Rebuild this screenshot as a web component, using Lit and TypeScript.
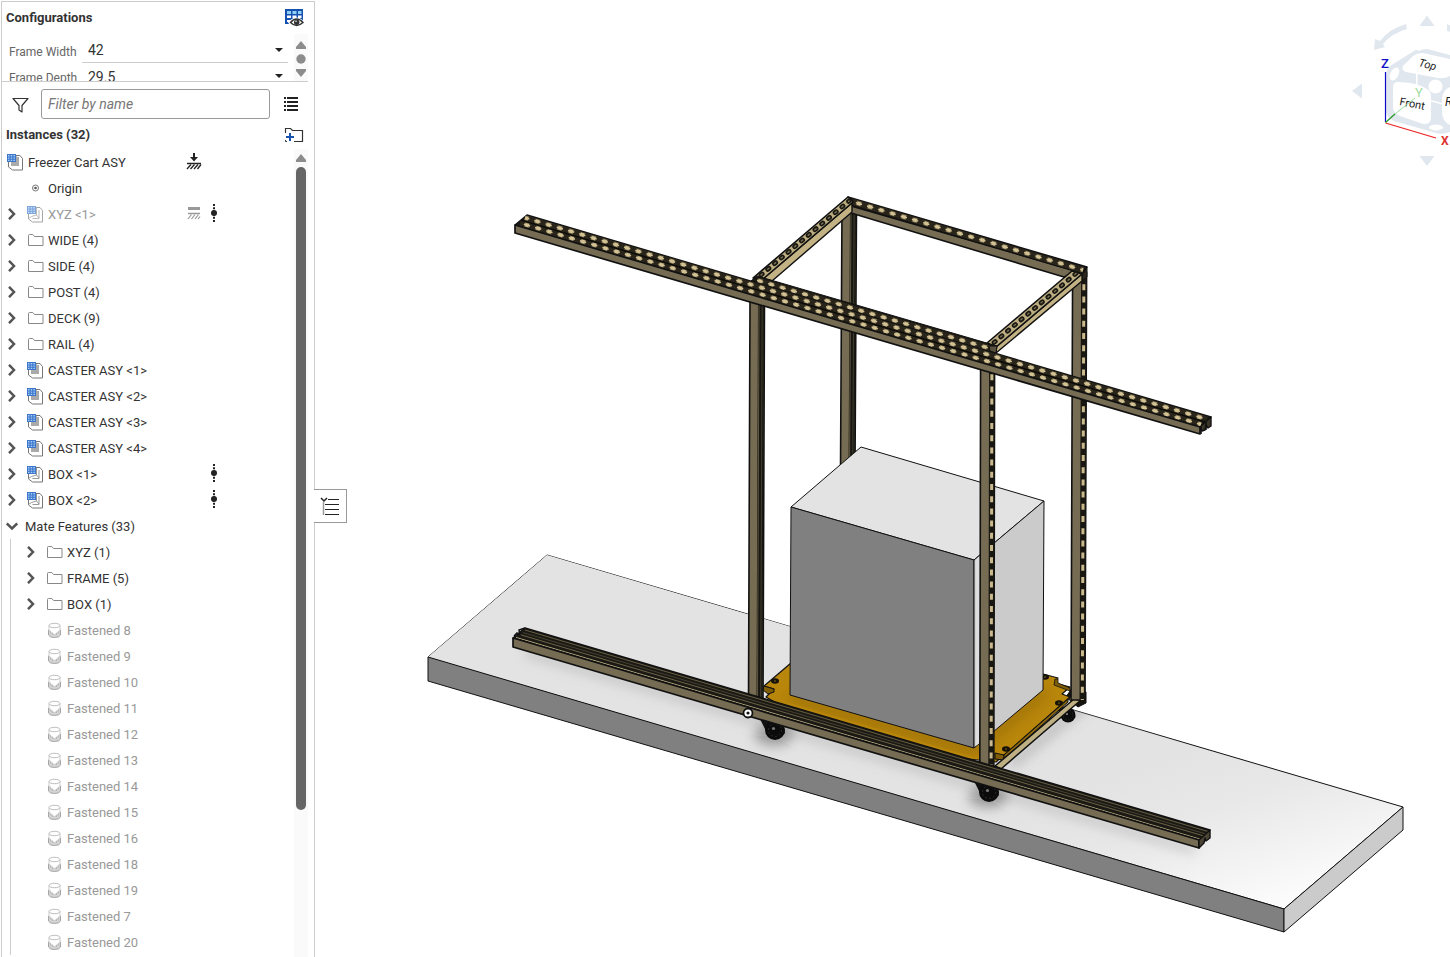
import { LitElement, html, svg, css, nothing } from "lit";
import { customElement } from "lit/decorators.js";

type Kind = "asm" | "sub" | "part" | "folder" | "mate" | "origin" | "none";
interface Row {
  label: string;
  kind: Kind;
  open?: boolean;
  leaf?: boolean;
  dim?: boolean;
  faint?: boolean;
  fix?: "ground" | "group";
  dof?: boolean;
}

const folder = (label: string): Row => ({ label, kind: "folder" });
const ROWS: Row[] = [
  { label: "Freezer Cart ASY", kind: "asm", leaf: true, fix: "ground" },
  { label: "Origin", kind: "origin", leaf: true },
  { label: "XYZ <1>", kind: "part", dim: true, faint: true, fix: "group", dof: true },
  ...["WIDE (4)", "SIDE (4)", "POST (4)", "DECK (9)", "RAIL (4)"].map(folder),
  ...[1, 2, 3, 4].map((n): Row => ({ label: `CASTER ASY <${n}>`, kind: "sub" })),
  ...[1, 2].map((n): Row => ({ label: `BOX <${n}>`, kind: "part", dof: true })),
  { label: "Mate Features (33)", kind: "none", open: true },
];
const MATES: Row[] = [
  ...["XYZ (1)", "FRAME (5)", "BOX (1)"].map(folder),
  ...[8, 9, 10, 11, 12, 13, 14, 15, 16, 18, 19, 7, 20].map(
    (n): Row => ({ label: `Fastened ${n}`, kind: "mate", leaf: true, dim: true })
  ),
];

const chevron = (open?: boolean) =>
  open
    ? svg`<svg width="12" height="12" viewBox="0 0 12 12"><path d="M.8 3.500 6 8.500 11.200 3.500" fill="none" stroke="#555" stroke-width="2.500"/></svg>`
    : svg`<svg width="12" height="12" viewBox="0 0 12 12"><path d="M3 .8 8 6 3 11.200" fill="none" stroke="#555" stroke-width="2.500"/></svg>`;

const assemblyIcon = (solid: boolean, faint = false) => svg`
  <svg width="17" height="17" viewBox="0 0 17 17" opacity=${faint ? 0.65 : 1}>
    <path d="M9 1.500h4l2.500 3v11.500H5.500l-4-3V7h7.500z" fill="#fff" stroke="#777"/>
    ${solid
      ? svg`<path d="M4 3h8v9H4z" fill="#aaa"/>`
      : svg`<path d="M9.500 2v7l-5 1.500M9.500 9l2.500 3M1.500 12.500l3-2M5.500 12.500h6.500V4" fill="none" stroke="#999"/>`}
    <path d="M0 0h9v8H0z" fill="#3b76cc"/>
    <path d="M1 1h1.500v1.500H1zM3.700 1h1.500v1.500H3.700zM6.400 1h1.500v1.500H6.400zM1 3.400h1.500v1.300H1zM3.700 3.400h1.500v1.300H3.700zM6.400 3.400h1.500v1.300H6.400zM1 5.700h1.500v1.300H1zM3.700 5.700h1.500v1.300H3.700zM6.400 5.700h1.500v1.300H6.400z" fill="#a9cdf5"/>
  </svg>`;

const icon = (r: Row) => {
  switch (r.kind) {
    case "asm":
    case "sub":
      return assemblyIcon(true);
    case "part":
      return assemblyIcon(false, r.faint);
    case "folder":
      return svg`<svg width="17" height="17" viewBox="0 0 17 17"><path d="M1.500 13.500v-10q0-1 1-1h3.300l1.700 2h8.500v9z" fill="#fff" stroke="#888"/></svg>`;
    case "origin":
      return svg`<svg width="17" height="17" viewBox="0 0 17 17"><circle cx="8.500" cy="8" r="3" fill="none" stroke="#777"/><circle cx="8.500" cy="8" r="1.300" fill="#555"/></svg>`;
    case "mate":
      return svg`<svg width="17" height="17" viewBox="0 0 17 17">
        <path d="M2.500 8v5q1 2.500 6 2.500t6-2.500V8l-2 1v2h-2v1.500h-4V11h-2V9z" fill="#d4d4d4" stroke="#a5a5a5"/>
        <path d="M3 3.500v5l2 1v1.500h2v1.500h3V11h2V9.500l2-1v-5" fill="#fff" stroke="#ccc"/>
        <ellipse cx="8.500" cy="3.500" rx="5.500" ry="2.200" fill="#fff" stroke="#bbb"/></svg>`;
    default:
      return nothing;
  }
};

const fixIcon = (f?: string) =>
  f === "ground"
    ? svg`<svg width="16" height="18" viewBox="0 0 16 18"><path d="M8 0v6" stroke="#222" stroke-width="2"/><path d="M4 4h8L8 8.500z" fill="#222"/><path d="M1 10.500h14" stroke="#222" stroke-width="1.500"/><path d="M1 16l4-4.500M4.500 16l4-4.500M8 16l4-4.500M11.500 16l3.500-4.500" stroke="#222" stroke-width="1.300"/></svg>`
    : f === "group"
    ? svg`<svg width="16" height="18" viewBox="0 0 16 18"><path d="M2 3.500h12" stroke="#999" stroke-width="3"/><path d="M2 8.500h12" stroke="#999" stroke-width="1.500"/><path d="M2 14l3.500-4.500M5.500 14l3.500-4.500M9 14l3.500-4.500M12 14l2-2.500" stroke="#999" stroke-width="1.200"/></svg>`
    : nothing;

const dofIcon = svg`<svg width="16" height="20" viewBox="0 0 16 20"><path d="M8 0v18" stroke="#222" stroke-width="2" stroke-dasharray="2 1.200"/><circle cx="8" cy="9" r="3" fill="#222"/></svg>`;

/* ---- model drawing ---- */
const poly = (points: string, fill: string, width = 1) =>
  svg`<polygon points=${points} fill=${fill} stroke="#111" stroke-width=${width} stroke-linejoin="round"/>`;
const seg = (d: string, color: string, width: number, dash = "", cap = "butt", offset = 0) =>
  svg`<path d=${d} fill="none" stroke=${color} stroke-width=${width} stroke-dasharray=${dash || "none"} stroke-linecap=${cap} stroke-dashoffset=${offset}/>`;

/* Perforated face running along the long axis. */
const perforated = (d: string, offset: number) => [
  seg(d, "#29251a", 6),
  seg(d, "#6b6146", 4.8, "5.200 6.500", "butt", offset - 4.6),
  seg(d, "#d3c294", 1.5, "6.500 5.200", "butt", offset - 4),
  seg(d, "#d3c294", 3.4, "3.700 8", "butt", offset - 5.4),
];

const sideBeam = (top: string, face: string, mid: string) => [
  poly(face, "#c2b284", 1.4),
  poly(top, "#bcad80", 1.6),
  seg(mid, "#1a1812", 4.8, "1.600 7.200", "round"),
  seg(mid, "#7d7354", 1.4, "1.600 7.200", "round"),
];

const slotPost = (x: number, y1: number, y2: number, lean: number) => [
  poly(`${x},${y1} ${x + 14.5},${y1} ${x + 14.5 - lean},${y2} ${x - lean},${y2}`, "#756c53", 1.6),
  seg(`M${x + 11} ${y1}L${x + 11 - lean} ${y2}`, "#191712", 6),
  seg(`M${x + 9} ${y1}L${x + 9 - lean} ${y2}`, "#5f573f", 1),
  seg(`M${x + 12.2} ${y1}L${x + 12.2 - lean} ${y2}`, "#4d4737", 0.8),
];
const holePost = (x: number, y1: number, y2: number, lean: number) => [
  poly(`${x},${y1} ${x + 14},${y1} ${x + 14 - lean},${y2} ${x - lean},${y2}`, "#756c53", 1.6),
  seg(`M${x + 11.3} ${y1}L${x + 11.3 - lean} ${y2}`, "#191712", 5.6),
  seg(`M${x + 11.3} ${y1}L${x + 11.3 - lean} ${y2}`, "#c9b98c", 3, "6 6.200"),
];

const caster = (x: number, y: number, s: number) => svg`
  <g transform="translate(${x} ${y}) scale(${s})">
    <path d="M-16-13 8-6 10 3 2 9-6 7z" fill="#111"/>
    <circle cx="0" cy="0" r="10" fill="#0b0b0b"/>
    <circle cx="0" cy="0" r="6.500" fill="none" stroke="#2c2c2c" stroke-dasharray="2 2"/>
    <circle cx="-1.500" cy="-1.500" r="1.600" fill="#777"/>
  </g>`;
const bolt = (x: number, y: number) =>
  svg`<ellipse cx=${x} cy=${y} rx="4" ry="2.800" fill="#15120a"/><ellipse cx=${x} cy=${y} rx="1.200" ry=".8" fill="#6b5415"/>`;

const scene = svg`
<svg class="scene" viewBox="315 0 1135 957" preserveAspectRatio="xMinYMin meet" role="img" aria-label="Freezer cart assembly">
  <defs>
    <linearGradient id="floor" gradientUnits="userSpaceOnUse" x1="1215" y1="740" x2="1270" y2="915">
      <stop offset="0" stop-color="#e3e3e3"/><stop offset=".35" stop-color="#e8e8e8"/><stop offset="1" stop-color="#fdfdfd"/>
    </linearGradient>
    <linearGradient id="fade" gradientUnits="userSpaceOnUse" x1="850" y1="0" x2="1200" y2="0">
      <stop offset="0" stop-color="#e3e3e3"/><stop offset="1" stop-color="#e3e3e3" stop-opacity="0"/>
    </linearGradient>
    <filter id="soft" x="-20%" y="-50%" width="140%" height="200%"><feGaussianBlur stdDeviation="6"/></filter>
    <clipPath id="slab"><path d="M547 555 1403 807 1284 909 428 657z"/></clipPath>
    <clipPath id="plate"><path d="M791 663 764 686 773 689 766 696 1000 765 1069 697 1061 690 1058 679 1043 675z"/></clipPath>
  </defs>
  ${poly("547,555 1403,807 1284,909 428,657", "url(#floor)")}
  <path d="M547 555 1403 807 1284 909 428 657z" fill="url(#fade)"/>
  ${poly("428,657 1284,909 1284,932 428,681", "#808080")}
  ${poly("1284,909 1403,807 1403,830 1284,932", "#cbcbcb")}
  <g clip-path="url(#slab)">
    <g filter="url(#soft)">
      <path d="M525 652 1195 850" stroke="#888" stroke-width="10" opacity=".3"/>
      <ellipse cx="774" cy="734" rx="20" ry="12" opacity=".3"/>
      <ellipse cx="988" cy="796" rx="20" ry="12" opacity=".3"/>
      <path d="M1010 765 1090 700" stroke="#777" stroke-width="12" opacity=".3"/>
    </g>
  </g>
  ${slotPost(842, 208, 470, 1.5)}
  ${caster(1068, 715, 0.75)}
  ${poly("1072,688 1086,692 1086,703 1078,707 1066,697", "#15140f")}
  ${poly("791,663 764,686 774,689 766,697 778,704 960,758 996,762 1004,755 1070,697 1062,694 1070,687 1055,683 1058,678 1043,674", "#b8860b", 1.2)}
  <g clip-path="url(#plate)">
    <path filter="url(#soft)" d="M790 698 974 751 1045 692" fill="none" stroke="#5a4000" stroke-width="5" opacity=".45"/>
  </g>
  ${poly("764,686 774,689 774,692 768,694 763,690", "#7f5d08")}
  ${poly("1055,679 1058,679 1058,683 1070,688 1070,691 1054,685", "#7f5d08", 0.8)}
  ${poly("995,753 1004,755 1004,760 995,759", "#7f5d08")}
  ${poly("1004,755 1068,699 1068,702 1004,759", "#8c670c", 1)}
  ${poly("995,766 1074,699 1081,700 1001,769", "#bfb083", 1.5)}
  ${seg("M1070 699 1080 697", "#d8cba0", 2)}
  ${bolt(775, 681)}${bolt(1006, 749)}${bolt(1059, 703)}${bolt(1045, 677)}
  ${poly("861,447 1044,501 974,560 791,507", "#e3e3e3")}
  ${poly("791,507 974,560 974,748 790,695", "#808080")}
  ${poly("974,560 1044,501 1043,690 974,748", "#cbcbcb")}
  <path d="M975.500 560 981 555.500V742l-5.500 4z" fill="#dedede"/>
  ${slotPost(750, 298, 700, 1.5)}
  ${holePost(1072.6, 272, 700, 1.6)}
  ${poly("1081,268 1087,267 1087,277 1082,281", "#2a261b")}

  ${poly("851,205 1078,272 1064,277 851,213", "#756c53", 1.6)}
  ${poly("848,197 1087,267 1083,273 851,206", "#191712", 1.4)}
  ${perforated("M852 201.500 1083 270", 0)}
  ${sideBeam("753,278 848,197 853,202 763,279", "763,279 852,203 852,212 772,281", "M761 275 849 201")}
  ${sideBeam("987,343 1072,271 1082,274 996,347", "996,347 1082,274 1082,281 996,353", "M994 342.500 1076 273.500")}
  ${holePost(980.6, 362, 771, 0.8)}

  ${poly("757,276 997,346 996,353 751,281", "#191712")}
  ${perforated("M757 280.300 994 349.700", 4)}
  ${poly("989,346 997,346 996,353 990,351", "#5b5340")}

  ${poly("527,215 1211,417 1200,427 515,225", "#191712", 1.4)}
  ${perforated("M525 217.800 1207 419.300", 6)}
  ${perforated("M520 223 1201 424.500", 0)}
  ${seg("M521 220.200 1206 422.200", "#0c0b08", 1.4)}
  ${poly("515,225 1200,427 1200,434 515,233", "#756c53", 1.7)}
  ${poly("1200,427 1211,417 1211,426 1208,428 1206,425 1205,430 1202,431", "#3c3628", 1.4)}
  ${seg("M1201 427v7M1206 422v8", "#111", 1.6)}

  ${caster(775, 730, 1)}
  ${caster(989, 792, 1)}
  ${poly("525,628 1210,830 1200,840 513,638", "#1b1913", 1.4)}
  ${seg("M525 630 1208 831.500", "#6f664b", 0.9)}
  ${seg("M523 632.600 1206 834", "#4b4535", 0.9)}
  ${seg("M520 634.600 1204 836", "#7f7556", 0.8)}
  ${seg("M516 637.400 1201 839.400", "#b0a47d", 1)}
  ${poly("513,638 1199,840 1199,848 513,647", "#756c53", 1.7)}
  ${poly("1199,840 1210,830 1210,838 1206,841 1205,838 1204,843 1199,848", "#4b4433", 1.4)}
  <path d="M514 636 517 633 520 635 519 630 525 628" fill="none" stroke="#111" stroke-width="1.500"/>
  <circle cx="748" cy="713" r="4.500" fill="#fff" stroke="#111" stroke-width="1.800"/>
  <circle cx="748" cy="713" r="1.600" fill="#111"/>
</svg>`;

const cube = svg`
<svg class="cube" width="110" height="180" viewBox="0 0 110 180" role="img" aria-label="View cube">
  <g fill="#e0e7ee">
    <path d="M87 15.500 94.500 26h-15zM87 166l7.500-10h-15zM12 91l10-7.500v15z"/>
    <path d="M66 24q-17 5-26 17l-5-2-1 11 11-3-2-3q9-11 24-15z"/>
    <path d="M107 24l4 2v6l-4-1z"/>
    <path d="M50 66 74 51q2-2 5 0 3-2 8-2l23 6v77q-8 3-14 1L54 121q-8-3-8-11V76q0-6 4-10z"/>
  </g>
  <g fill="#fff">
    <path d="M63 66 73 56q4-3 10-3l27 6v17q-5 3-12 2L66 72q-5-2-3-6z"/>
    <path d="M58 82q18 0 29 7 4 2 4 7v21q0 8-8 7l-23-8q-7-3-7-9V87q0-5 5-5z"/>
    <path d="M102 112V98q1-8 8-11v38q-8-4-8-13z"/>
    <circle cx="95.500" cy="86.500" r="7"/>
    <ellipse cx="54.500" cy="74" rx="4" ry="7" transform="rotate(28 54.500 74)"/>
    <ellipse cx="96" cy="127.500" rx="7" ry="3"/>
    <path d="M76 74h1.500v12H76zM91 100l11 3v1.500l-11-3z"/>
  </g>
  <text x="78" y="66" font-size="11" font-style="italic" transform="rotate(14 78 66)" fill="#222">Top</text>
  <text x="59" y="105" font-size="11" transform="rotate(11 59 105)" fill="#222">Front</text>
  <text x="105" y="106" font-size="12" font-style="italic" fill="#222">R</text>
  <path d="M45.500 122V72" stroke="#0a0ac8" stroke-width="1.200"/>
  <path d="M45.500 123 96 138" stroke="#e22" stroke-width="1.300"/>
  <path d="M45.500 122.500 55 114" stroke="#2a9a2a" stroke-width="1.300"/>
  <path d="M55 114 75 98" stroke="#9fdc9f"/>
  <text x="41" y="68" font-size="13" font-weight="500" fill="#1010c8">Z</text>
  <text x="75" y="97" font-size="13" fill="#9fdc9f">Y</text>
  <text x="101" y="145" font-size="12" font-weight="700" fill="#e03030">X</text>
</svg>`;

@customElement("app-root")
export class AppRoot extends LitElement {
  static styles = css`
    :host {
      display: flex;
      height: 100vh;
      overflow: hidden;
      background: #fff;
      color: #333;
      font: 13px/20px Roboto, "Liberation Sans", sans-serif;
    }
    * { box-sizing: border-box; }
    svg { display: block; flex: none; }
    button { appearance: none; border: 0; padding: 0; background: none; display: grid; place-items: center; cursor: pointer; }
    .panel {
      flex: none;
      width: 314px;
      display: flex;
      flex-direction: column;
      border: 1px solid #ccc;
      border-bottom: 0;
      margin-top: 1px;
      margin-left: 1px;
    }
    .head { display: flex; align-items: center; justify-content: space-between; padding: 0 10px 0 4px; height: 32px; }
    h2 { margin: 0; font-size: 13px; line-height: 20px; font-weight: 700; }
    .tall { height: 28px; }
    .config { display: flex; height: 48px; overflow: hidden; border-bottom: 1px solid #ccc; margin-right: 6px; }
    .fields { flex: 1; padding-left: 7px; display: flex; flex-direction: column; }
    .field { display: flex; height: 29px; flex: none; align-items: stretch; }
    .field label { width: 73px; padding-top: 8px; font-size: 12px; color: #666; white-space: nowrap; }
    .field + .field label { padding-top: 5px; }
    .field + .field { height: 24px; }
    .pick { flex: 1; display: grid; grid-template-rows: 100%; align-items: center; border-bottom: 1px solid #ccc; }
    .pick select, .pick svg { grid-area: 1 / 1; }
    .pick svg { justify-self: end; margin: 3px 5px 0 0; }
    .pick select { appearance: none; border: 0; background: none; padding: 4px 6px 0; font: inherit; font-size: 14px; color: #333; height: 28px; }
    .mini { width: 14px; display: flex; flex-direction: column; align-items: center; padding-top: 7px; gap: 5px; margin-left: 6px; background: #fafafa; }
    .filter { display: flex; align-items: center; padding: 7px 15px 2px 10px; gap: 12px; }
    .filter input {
      flex: 1; min-width: 0; height: 30px; border: 1px solid #999; border-radius: 3px;
      padding: 0 6px; font: italic 14px/20px Roboto, sans-serif; color: #333;
    }
    .filter input::placeholder { color: #777; opacity: 1; }
    .list { margin-left: 1px; }
    .body { flex: 1; min-height: 0; display: flex; }
    .tree { flex: 1; overflow: hidden; }
    ul { list-style: none; margin: 0; padding: 0; }
    .row { display: flex; align-items: center; height: 26px; padding-right: 70px; white-space: nowrap; }
    .row .label { flex: 1; padding: 1px 0 0 4px; }
    .row.open .label { padding-left: 7px; }
    .twist { width: 12px; height: 12px; margin-left: 4px; }
    .icon { width: 17px; margin-left: 9px; }
    .root .icon { margin-left: 5px; }
    .cell { width: 20px; display: grid; place-items: center; }
    .dim { color: #999; }
    .nest { margin-left: 8px; border-left: 1px solid #ccc; }
    .nest .row { padding-left: 10px; }
    .bar { width: 14px; margin-right: 6px; background: #fafafa; display: flex; flex-direction: column; align-items: center; padding-top: 5px; gap: 5px; }
    .track { flex: 1; width: 10px; }
    .thumb { height: 81.4%; background: #666; border-radius: 5px; }
    .view { position: relative; flex: 1; min-width: 0; }
    .scene { width: 100%; height: auto; }
    .cube { position: absolute; top: 0; right: 0; }
    .flyout { position: absolute; left: -1px; top: 489px; width: 33px; height: 34px; border: 1px solid #999; border-left: 0; background: #fff; }
  `;

  private row(r: Row) {
    const root = r.kind === "asm";
    return html`<li>
      <div class="row ${r.open ? "open" : ""} ${root ? "root" : ""} ${r.dim ? "dim" : ""}">
        ${root
          ? nothing
          : r.leaf
          ? html`<span class="twist"></span>`
          : html`<button class="twist" aria-label=${`Toggle ${r.label}`} aria-expanded=${r.open ? "true" : "false"}>${chevron(r.open)}</button>`}
        ${r.kind === "none" ? nothing : html`<span class="icon">${icon(r)}</span>`}
        <span class="label">${r.label}</span>
        <span class="cell">${fixIcon(r.fix)}</span>
        <span class="cell">${r.dof ? dofIcon : nothing}</span>
      </div>
      ${r.open ? html`<ul class="nest">${MATES.map((m) => this.row(m))}</ul>` : nothing}
    </li>`;
  }

  private field(id: string, name: string, value: string) {
    return html`<div class="field">
      <label for=${id}>${name}</label>
      <span class="pick">
        <select id=${id}><option>${value}</option></select>
        <svg width="8" height="4" viewBox="0 0 8 4"><path d="M0 0h8L4 4z" fill="#222" /></svg>
      </span>
    </div>`;
  }

  render() {
    return html`
      <aside class="panel">
        <div class="head">
          <h2>Configurations</h2>
          <button aria-label="Show configuration table">
            <svg width="20" height="20" viewBox="0 0 20 20">
              <path d="M1 1h18v15H1z" fill="#1651b0" />
              <path d="M3 3h4v3H3zM8.500 3h4v3h-4zM14 3h3.500v3H14z" fill="#8fd0f7" />
              <path d="M3 7.500h4v2.500H3zM8.500 7.500h4v2.500h-4zM14 7.500h3.500v2.500H14zM3 12h4v2H3z" fill="#fff" />
              <path d="M6 14.500q6.500-7 13 0-6.500 7-13 0z" fill="#fff" stroke="#fff" stroke-width="3" />
              <path d="M6.500 14.500q6-7 12.500 0-6.500 6-12.500 0z" fill="#fff" stroke="#333" stroke-width="1.400" />
              <circle cx="12.700" cy="14.200" r="2.700" fill="#333" /><circle cx="12" cy="13.300" r=".8" fill="#fff" />
            </svg>
          </button>
        </div>
        <div class="config">
          <div class="fields">
            ${this.field("fw", "Frame Width", "42")} ${this.field("fd", "Frame Depth", "29.5")}
          </div>
          <div class="mini">
            <svg width="10" height="8" viewBox="0 0 10 8"><path d="M5 0l5 6v2H0V6z" fill="#8c8c8c" /></svg>
            <svg width="10" height="10" viewBox="0 0 10 10"><circle cx="5" cy="5" r="4.700" fill="#8c8c8c" /></svg>
            <svg width="10" height="8" viewBox="0 0 10 8"><path d="M5 8l5-6V0H0v2z" fill="#8c8c8c" /></svg>
          </div>
        </div>
        <div class="filter">
          <button aria-label="Filter">
            <svg width="17" height="17" viewBox="0 0 17 17"><path d="M1 2.500h15L10 9.500v6.500L7 14V9.500z" fill="#fff" stroke="#333" stroke-width="1.200" stroke-linejoin="round" /></svg>
          </button>
          <input type="text" placeholder="Filter by name" aria-label="Filter by name" />
          <button class="list" aria-label="List view">
            <svg width="16" height="16" viewBox="0 0 16 16"><path d="M1 2h2M1 6h2M1 10h2M1 14h2M4 2h11M4 6h11M4 10h11M4 14h11" stroke="#222" stroke-width="2" /></svg>
          </button>
        </div>
        <div class="head tall">
          <h2>Instances (32)</h2>
          <button aria-label="Create folder">
            <svg width="20" height="16" viewBox="0 0 20 16"><path d="M1.500 6V1.500h5l2 2h10v11H10" fill="none" stroke="#333" stroke-width="1.200" /><path d="M1.500 13v1.500H3" fill="none" stroke="#333" /><path d="M6 6v8M2 10h8" stroke="#1651b0" stroke-width="2" /></svg>
          </button>
        </div>
        <div class="body">
          <div class="tree"><ul>${ROWS.map((r) => this.row(r))}</ul></div>
          <div class="bar">
            <svg width="10" height="8" viewBox="0 0 10 8"><path d="M5 0l5 6v2H0V6z" fill="#8c8c8c" /></svg>
            <div class="track"><div class="thumb"></div></div>
          </div>
        </div>
      </aside>
      <main class="view">
        ${scene} ${cube}
        <button class="flyout" aria-label="Toggle feature list">
          <svg width="20" height="20" viewBox="0 0 20 20"><path d="M1 2l3 3 3-3" fill="none" stroke="#222" stroke-width="1.500" /><path d="M3.500 6v13" stroke="#999" stroke-width="1.500" /><path d="M8 3.500h11M5 8.500h14M5 13.500h14M5 18.500h14" stroke="#222" stroke-width="1.200" /></svg>
        </button>
      </main>
    `;
  }
}
